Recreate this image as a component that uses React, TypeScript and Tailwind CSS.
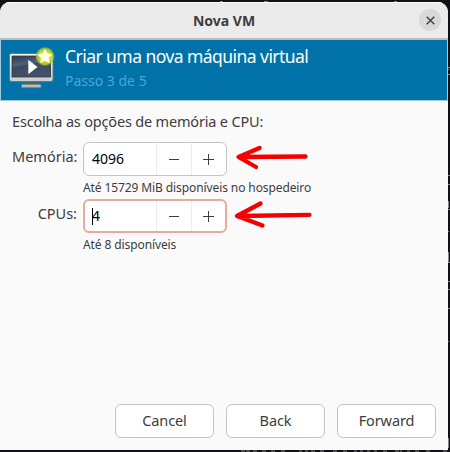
import type { ReactNode } from "react";

const ui = "font-['Noto_Sans','Open_Sans',sans-serif]";

function Button({ children }: { children: ReactNode }) {
  return (
    <button className="flex h-[34px] w-[99px] items-center justify-center rounded-[6px] border border-[#c4c4c4] bg-white pb-0.5 text-[14.5px] leading-5 tracking-[-0.1px] text-[#3d3d3d]">
      {children}
    </button>
  );
}

function Spin({ value, focused }: { value: string; focused?: boolean }) {
  return (
    <div className={`flex h-[34px] w-36 rounded-[6px] bg-white ${focused ? "border-2 border-[#e3ad99]" : "border border-[#c4c4c4]"}`}>
      <div className={`flex flex-1 items-center text-[14px] leading-5 text-black ${focused ? "pl-[7px]" : "pl-2"}`}>
        {focused && <span className="-mr-px h-[17px] w-px bg-black" />}
        <span>{value}</span>
      </div>
      <div className="flex w-[35px] items-center justify-center border-l border-[#ececec]">
        <span className="h-px w-2.5 bg-[#3d3d3d]" />
      </div>
      <div className={`flex items-center border-l border-[#ececec] pl-[11px] ${focused ? "w-[34px]" : "w-[35px]"}`}>
        <svg width="11" height="11" viewBox="0 0 11 11" stroke="#3d3d3d"><path d="M0 5.5H11M5.5 0V11" /></svg>
      </div>
    </div>
  );
}

function VmIcon() {
  return (
    <svg width="46" height="42" viewBox="0 0 46 42" className="shrink-0 overflow-visible">
      <defs>
        <linearGradient id="frame" x1="0" y1="0" x2="0" y2="1"><stop stopColor="#fff" /><stop offset="1" stopColor="#c9ccca" /></linearGradient>
        <linearGradient id="screen" x1="0" y1="0" x2="0.3" y2="1"><stop stopColor="#2c3b4f" /><stop offset="0.45" stopColor="#50627a" /><stop offset="0.5" stopColor="#3c4b61" /><stop offset="1" stopColor="#435166" /></linearGradient>
        <radialGradient id="glow"><stop stopColor="#f8f87a" /><stop offset="0.55" stopColor="#d3e021" /><stop offset="0.8" stopColor="#b4d02a" stopOpacity="0.85" /><stop offset="1" stopColor="#7fb540" stopOpacity="0" /></radialGradient>
      </defs>
      <path d="M17 34h11l1 4H16z" fill="#555b5e" />
      <rect x="12.5" y="37.3" width="19.5" height="3.4" rx="1" fill="#b9bcbc" stroke="#6d7679" strokeWidth="0.8" />
      <rect x="0.5" y="6.5" width="43.5" height="28" rx="2" fill="url(#frame)" stroke="#6d7679" />
      <rect x="3" y="9" width="38.5" height="21" fill="url(#screen)" stroke="#2d3540" strokeWidth="0.8" />
      <path d="M19.3 12.8 28.5 20 19.3 27.2z" fill="#fff" />
      <circle cx="36" cy="9.5" r="10" fill="url(#glow)" />
      <path d="m36 2.5 2.1 4.4 4.9.6-3.6 3.3 1 4.9-4.4-2.5-4.4 2.5 1-4.9L29 7.5l4.9-.6z" fill="#fffff0" stroke="#fffff0" strokeWidth="0.6" strokeLinejoin="round" />
    </svg>
  );
}

export default function App() {
  return (
    <div className={`relative h-[452px] w-[450px] overflow-hidden bg-[#121114] pt-0.5 ${ui}`}>
      {/* Specks of the terminal showing around the dialog */}
      <svg className="absolute inset-0" width="450" height="452" stroke="#858585" fill="none">
        <path d="M220 1.5h3M264 1.5h4M394 1.5h3" />
        <path d="M448 67.5h2M448 69.5h1M448 74.5h2M448 175.5h2M448 184.5h2M448.5 201v7M448 209.5h2M448 231.5h1M448.5 252v10M448 262.5h2M448 281.5h2M448 289.5h2M448 308.5h2M448 341.5h1M448.5 438v10" />
        <path d="M241 451h9M253 451h5M262 451h5M271 451h5M281 451h5M299 451h3M305 451h3M311 451h5M320 451h5M333 451h5M343 451h5M354 451h3M360 451h3M367 451h3M374 451h3M383 451h5M395 451h7M407 451h3M415 451h5M426 451h5M443 451h5" strokeDasharray="4 1" />
      </svg>
      <main className="relative flex h-[448px] w-[448px] flex-col overflow-hidden rounded-t-[10px] bg-[#fafafa] text-[#3d3d3d]">
        <header className="relative flex h-[38px] shrink-0 items-center justify-center border-t border-b-2 border-t-white border-b-[#bababa] bg-[#ebebeb]">
          <h1 className="text-[14px] leading-5 font-bold">Nova VM</h1>
          <button className="absolute top-[6px] right-[7px] flex size-[22px] items-center justify-center rounded-full bg-[#d9d9d9]">
            <svg width="9" height="9" viewBox="0 0 9 9" stroke="#3d3d3d" strokeWidth="1.4"><path d="m.7.7 7.6 7.6m0-7.6L.7 8.3" /></svg>
          </button>
        </header>
        <section className="flex h-[61px] shrink-0 border border-t-0 border-[#a4cade] bg-[#0072a8] pt-[7px] pl-2">
          <VmIcon />
          <div className="-mt-[3px] pl-2.5">
            <h2 className="text-[17.5px] leading-6 tracking-[-0.55px] whitespace-nowrap text-white">Criar uma nova máquina virtual</h2>
            <p className="pt-px text-[14px] leading-6 whitespace-nowrap text-[#4ba5d8]">Passo 3 de 5</p>
          </div>
        </section>
        <section className="px-3 pt-2.5">
          <p className="text-[14.5px] leading-5 tracking-[-0.18px] whitespace-nowrap">Escolha as opções de memória e CPU:</p>
          <div className="mt-[11px] grid grid-cols-[65px_1fr] gap-x-1.5">
            <label className="pt-1 text-right text-[14.5px] leading-5">Memória:</label>
            <Spin value="4096" />
            <p className="col-start-2 h-[23px] pt-0.5 text-[12px] leading-5 tracking-[-0.1px] whitespace-nowrap">Até 15729 MiB disponíveis no hospedeiro</p>
            <label className="pt-1 text-right text-[14.5px] leading-5">CPUs:</label>
            <Spin value="4" focused />
            <p className="col-start-2 h-[23px] pt-0.5 text-[12px] leading-5 tracking-[-0.1px] whitespace-nowrap">Até 8 disponíveis</p>
          </div>
        </section>
        <footer className="mt-auto flex justify-end gap-3 pr-3 pb-3">
          <Button>Cancel</Button>
          <Button>Back</Button>
          <Button>Forward</Button>
        </footer>
      </main>
      <svg className="absolute top-[145px] left-[232px]" width="84" height="86" viewBox="0 0 84 86" fill="none" stroke="#f40000" strokeWidth="4.3" strokeLinecap="round" strokeLinejoin="round">
        <path d="M73.5 11.5 7 12M27.5 3 6.5 12 24 22" />
        <path d="M77.5 69.8 6 71M28.5 58.5 5 71 30.5 80.5" />
      </svg>
    </div>
  );
}
